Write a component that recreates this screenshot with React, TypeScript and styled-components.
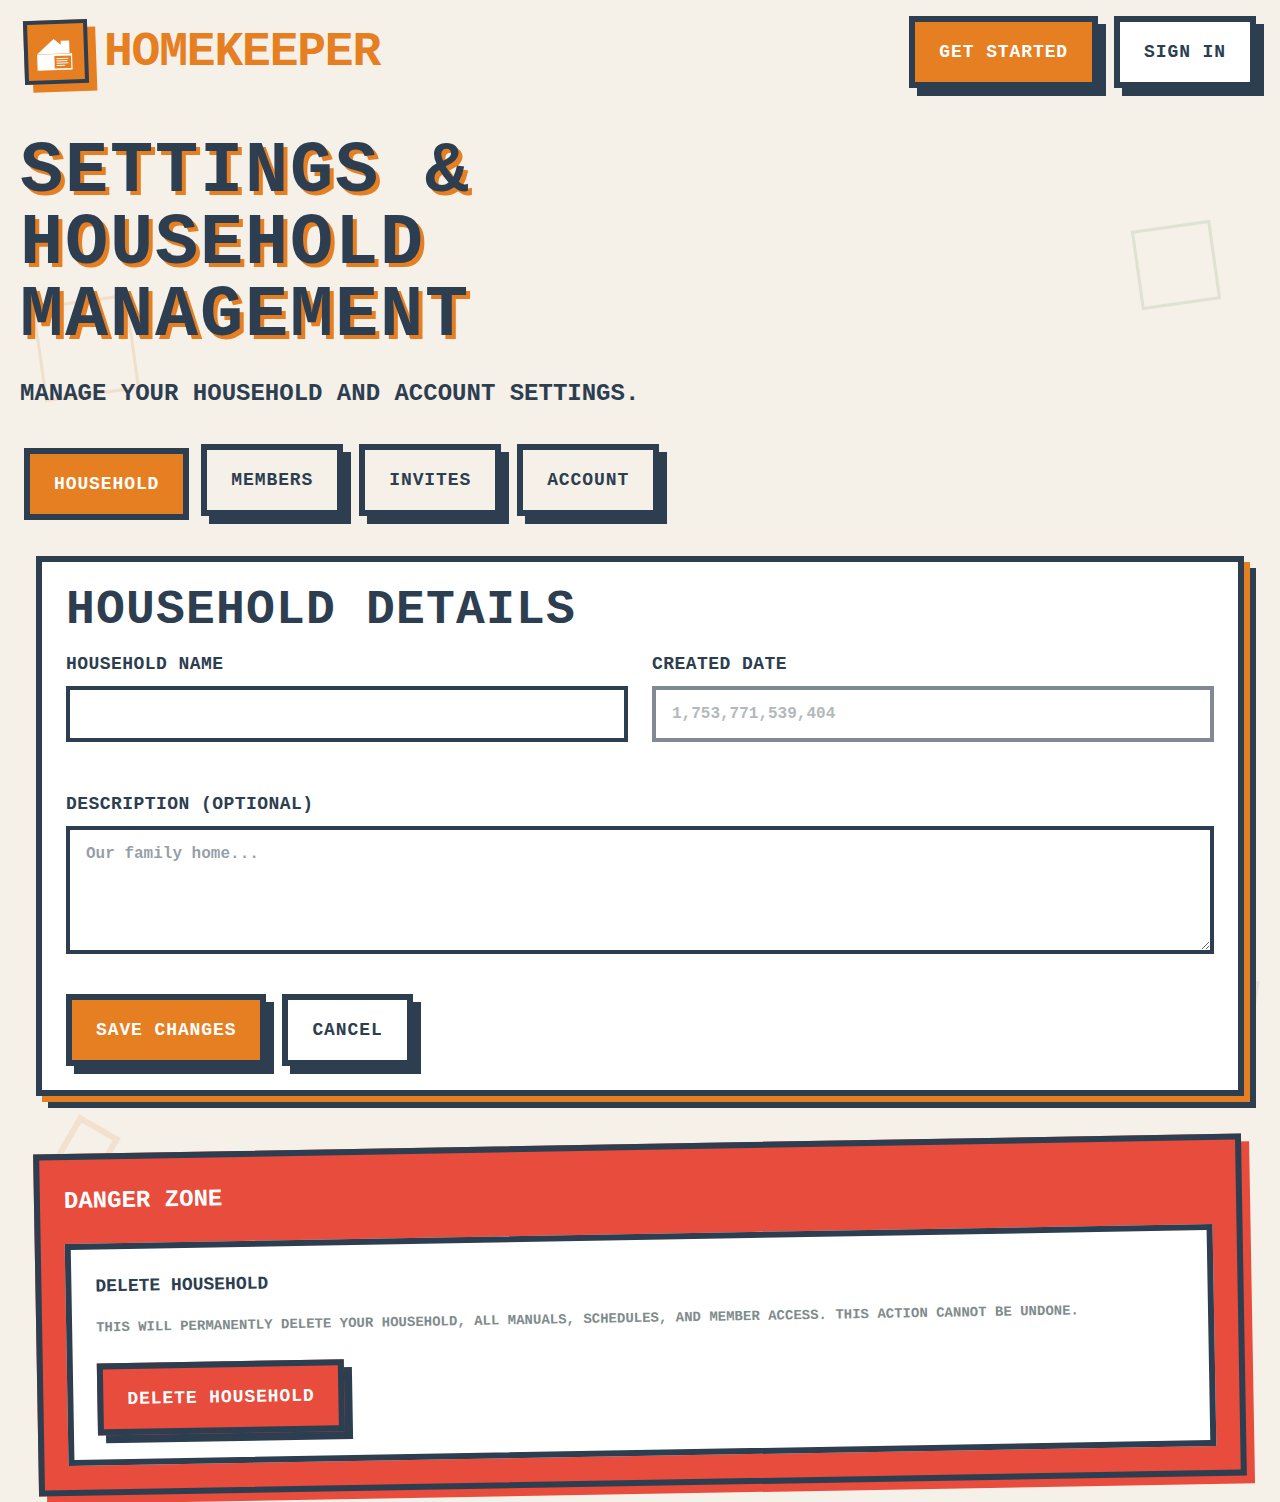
import React from "react";
import styled, { createGlobalStyle, css } from "styled-components";

const ink = "#2c3e50";
const orange = "#e67e22";
const red = "#e74c3c";
const cream = "#f5f0e8";

const GlobalStyle = createGlobalStyle`
  *, *::before, *::after { box-sizing: border-box; }
  html, body { margin: 0; padding: 0; background: ${cream}; }
  body {
    font-family: "Liberation Mono", "Courier New", monospace;
    font-weight: 700;
    color: ${ink};
  }
  h1, h2, h3, h4, p { margin: 0; }
`;

const Page = styled.div`
  position: relative;
  height: 1502px;
  overflow: hidden;
  background: ${cream};
`;

const Decoration = styled.div<{
  $size: number;
  $color: string;
  $border: number;
  $angle: number;
  $top: number;
  $left?: number;
  $right?: number;
  $opacity: number;
}>`
  position: absolute;
  top: ${(p) => p.$top}px;
  ${(p) => (p.$left !== undefined ? `left: ${p.$left}px;` : `right: ${p.$right}px;`)}
  width: ${(p) => p.$size}px;
  height: ${(p) => p.$size}px;
  border: ${(p) => p.$border}px solid ${(p) => p.$color};
  opacity: ${(p) => p.$opacity};
  transform: rotate(${(p) => p.$angle}deg);
  pointer-events: none;
`;

const Header = styled.header`
  position: relative;
  display: flex;
  align-items: center;
  justify-content: space-between;
  padding: 16px 24px;
`;

const Brand = styled.div`
  display: flex;
  align-items: center;
  gap: 16px;
`;

const LogoBox = styled.div`
  display: flex;
  align-items: center;
  justify-content: center;
  width: 64px;
  height: 64px;
  background: ${orange};
  border: 4px solid ${ink};
  box-shadow: 8px 8px 0 ${orange};
  transform: rotate(-2deg);
`;

const BrandName = styled.span`
  font-size: 48px;
  line-height: 48px;
  letter-spacing: -0.025em;
  color: ${orange};
`;

const ButtonRow = styled.div`
  display: flex;
  gap: 16px;
`;

const variants = {
  primary: css`
    background: ${orange};
    color: #fff;
  `,
  plain: css`
    background: #fff;
    color: ${ink};
  `,
  tab: css`
    background: ${cream};
    color: ${ink};
  `,
  danger: css`
    background: ${red};
    color: #fff;
  `,
};

const Button = styled.button<{ $variant: keyof typeof variants; $pressed?: boolean }>`
  height: 72px;
  padding: 16px 24px;
  border: 6px solid ${ink};
  border-radius: 0;
  font: inherit;
  font-size: 18px;
  line-height: 28px;
  letter-spacing: 0.05em;
  text-transform: uppercase;
  white-space: nowrap;
  cursor: pointer;
  ${(p) => variants[p.$variant]}
  ${(p) =>
    p.$pressed
      ? css`
          transform: translate(4px, 4px);
        `
      : css`
          box-shadow: 8px 8px 0 ${ink};
        `}
`;

const Main = styled.main`
  position: relative;
  padding: 32px 20px 0;
`;

const Title = styled.h1`
  max-width: 560px;
  font-size: 72px;
  line-height: 72px;
  letter-spacing: 0.025em;
  text-shadow: 4px 4px 0 ${orange};
  text-transform: uppercase;
`;

const Subtitle = styled.p`
  margin: 24px 0 32px;
  font-size: 24px;
  line-height: 36px;
`;

const Panels = styled.div`
  display: flex;
  flex-direction: column;
  gap: 48px;
  padding: 40px 16px 0;
`;

const Card = styled.section`
  padding: 24px;
  background: #fff;
  border: 6px solid ${ink};
  box-shadow: 6px 6px 0 ${orange}, 12px 12px 0 ${ink};
`;

const CardTitle = styled.h2`
  margin-bottom: 16px;
  font-size: 48px;
  line-height: 48px;
  letter-spacing: 0.025em;
`;

const FieldGrid = styled.div`
  display: grid;
  grid-template-columns: 1fr 1fr;
  gap: 24px;
  margin-bottom: 48px;
`;

const Field = styled.label`
  display: flex;
  flex-direction: column;
  gap: 8px;
`;

const FieldLabel = styled.span`
  font-size: 18px;
  line-height: 28px;
  letter-spacing: 0.025em;
`;

const control = css`
  display: block;
  width: 100%;
  margin: 0;
  border: 4px solid ${ink};
  border-radius: 0;
  background: #fff;
  color: ${ink};
  font: inherit;
  font-size: 16px;
  line-height: 24px;
  outline: none;
`;

const Input = styled.input`
  ${control}
  height: 56px;
  padding: 12px 16px;
  &:disabled {
    opacity: 0.6;
    color: #7f8c8d;
  }
`;

const TextArea = styled.textarea`
  ${control}
  height: 128px;
  padding: 12px 16px;
  resize: vertical;
  &::placeholder {
    color: rgba(44, 62, 80, 0.5);
    opacity: 1;
  }
`;

const FormActions = styled(ButtonRow)`
  margin-top: 40px;
`;

const DangerZone = styled.section`
  height: 342px;
  padding: 24px;
  background: ${red};
  border: 6px solid ${ink};
  box-shadow: 8px 8px 0 ${red};
  transform: rotate(-1deg);
`;

const DangerTitle = styled.h3`
  margin-bottom: 24px;
  font-size: 24px;
  line-height: 36px;
  color: #fff;
`;

const DangerCard = styled.div`
  height: 222px;
  padding: 24px;
  background: #fff;
  border: 6px solid ${ink};
`;

const DangerHeading = styled.h4`
  margin-bottom: 16px;
  font-size: 18px;
  line-height: 27px;
`;

const DangerText = styled.p`
  margin-bottom: 24px;
  font-size: 14px;
  line-height: 23px;
  color: #7f8c8d;
`;

const HouseIcon = () => (
  <svg width="40" height="40" viewBox="1 -3 40 40">
    <path d="M2 18.8 L19 4 L26 10 V6 H34.5 V18.8 Z" fill="#fff" />
    <path d="M2 19 H35.5 L37 18 V35 H2 Z" fill="#fff" />
    <rect x="19.2" y="21" width="16.6" height="12.5" fill={orange} />
    <path
      d="M21.2 23.7 H33 M21.2 26 H32 M21.2 28.3 H33 M21.2 30.6 H29.5"
      stroke="#fff"
      strokeWidth="1"
    />
  </svg>
);

const tabs = ["Household", "Members", "Invites", "Account"];

export default function App() {
  return (
    <>
      <GlobalStyle />
      <Page>
        <Decoration $size={96} $color={orange} $border={3} $angle={-8} $top={300} $left={38.4} $opacity={0.15} />
        <Decoration $size={80} $color="#5f9a50" $border={3} $angle={-8} $top={225} $right={64} $opacity={0.15} />
        <Decoration $size={48} $color={orange} $border={6} $angle={30} $top={1123} $left={64} $opacity={0.13} />
        <Decoration $size={64} $color={ink} $border={4} $angle={9} $top={976} $right={25.2} $opacity={0.07} />
        <Header>
          <Brand>
            <LogoBox>
              <HouseIcon />
            </LogoBox>
            <BrandName>HOMEKEEPER</BrandName>
          </Brand>
          <ButtonRow>
            <Button $variant="primary">Get Started</Button>
            <Button $variant="plain">Sign In</Button>
          </ButtonRow>
        </Header>
        <Main>
          <Title>Settings &amp; Household Management</Title>
          <Subtitle>MANAGE YOUR HOUSEHOLD AND ACCOUNT SETTINGS.</Subtitle>
          <ButtonRow>
            {tabs.map((tab, i) => (
              <Button key={tab} $variant={i === 0 ? "primary" : "tab"} $pressed={i === 0}>
                {tab}
              </Button>
            ))}
          </ButtonRow>
          <Panels>
            <Card>
              <CardTitle>HOUSEHOLD DETAILS</CardTitle>
              <FieldGrid>
                <Field>
                  <FieldLabel>HOUSEHOLD NAME</FieldLabel>
                  <Input type="text" />
                </Field>
                <Field>
                  <FieldLabel>CREATED DATE</FieldLabel>
                  <Input type="text" disabled defaultValue="1,753,771,539,404" />
                </Field>
              </FieldGrid>
              <Field>
                <FieldLabel>DESCRIPTION (OPTIONAL)</FieldLabel>
                <TextArea placeholder="Our family home..." />
              </Field>
              <FormActions>
                <Button $variant="primary">Save Changes</Button>
                <Button $variant="plain">Cancel</Button>
              </FormActions>
            </Card>
            <DangerZone>
              <DangerTitle>DANGER ZONE</DangerTitle>
              <DangerCard>
                <DangerHeading>DELETE HOUSEHOLD</DangerHeading>
                <DangerText>
                  THIS WILL PERMANENTLY DELETE YOUR HOUSEHOLD, ALL MANUALS, SCHEDULES, AND MEMBER ACCESS. THIS ACTION
                  CANNOT BE UNDONE.
                </DangerText>
                <Button $variant="danger">Delete Household</Button>
              </DangerCard>
            </DangerZone>
          </Panels>
        </Main>
      </Page>
    </>
  );
}
